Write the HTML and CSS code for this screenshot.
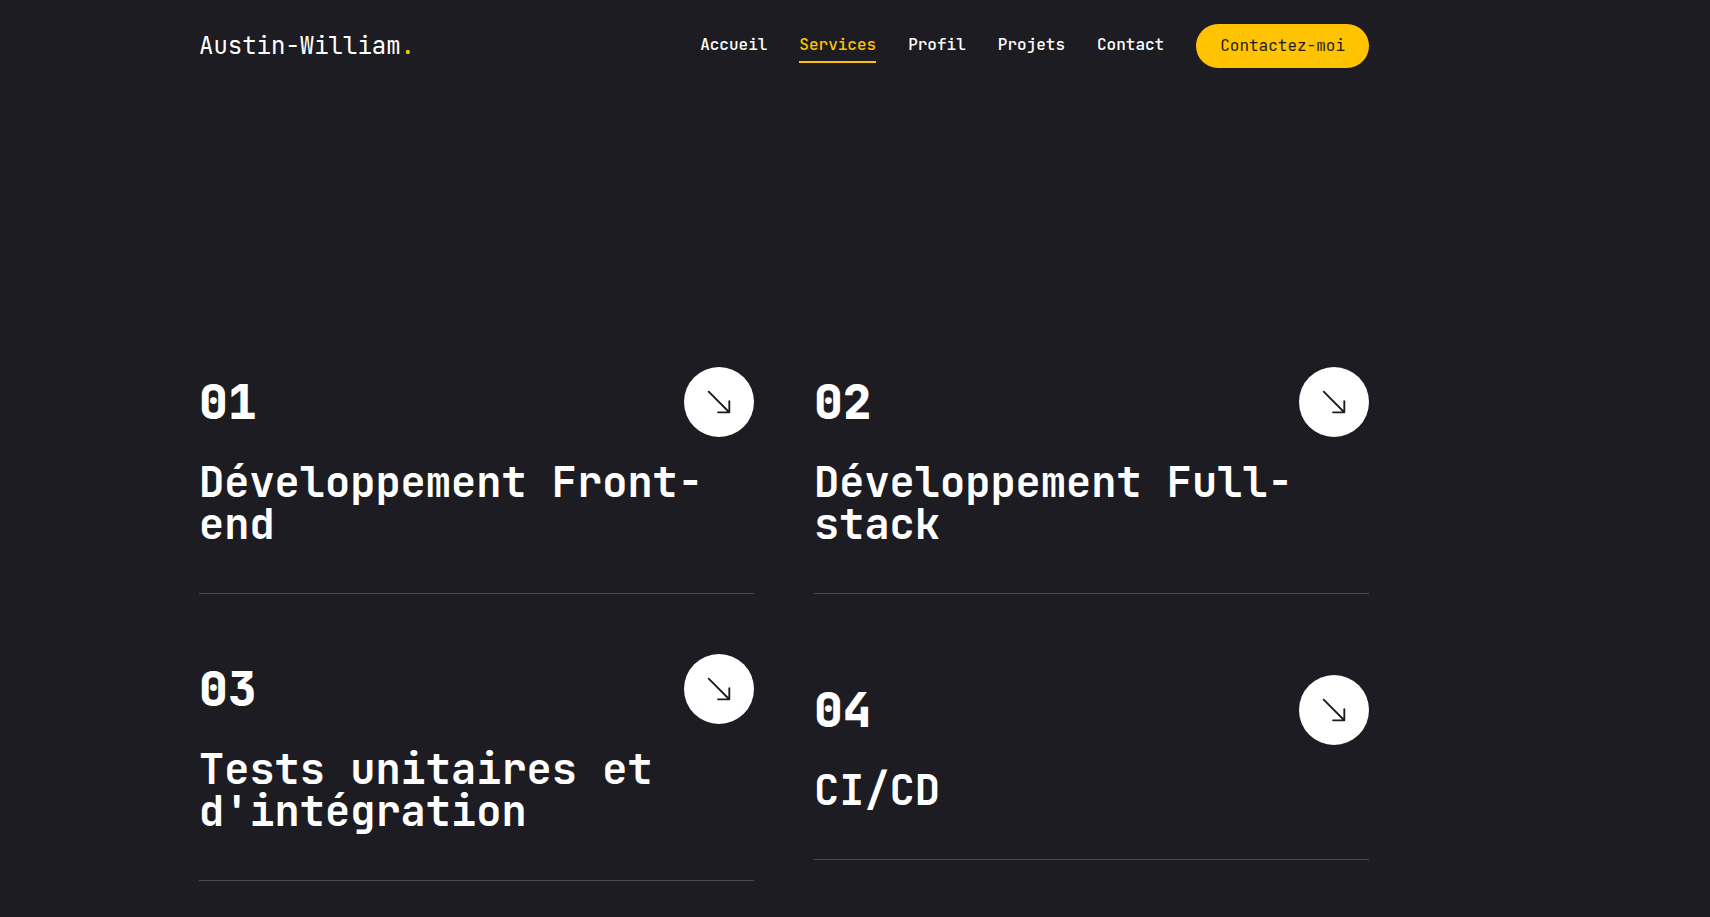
FILE: index.html
```html
<!DOCTYPE html>
<html lang="fr">
<head>
<meta charset="utf-8">
<meta name="viewport" content="width=device-width, initial-scale=1">
<title>Austin-William – Services</title>
<link rel="stylesheet" href="styles.css">
</head>
<body>
<svg class="sprite" aria-hidden="true">
  <symbol id="arrow" viewBox="0 0 16 16">
    <path fill-rule="evenodd" d="M14 13.5a.5.5 0 0 1-.5.5h-6a.5.5 0 0 1 0-1h4.793L2.146 2.854a.5.5 0 1 1 .708-.708L13 12.293V7.5a.5.5 0 0 1 1 0z"/>
  </symbol>
</svg>
<header class="header container">
  <a class="logo" href="#">Austin-William<span class="accent">.</span></a>
  <div class="menu">
    <nav class="nav">
      <a class="nav-link" href="#">Accueil</a>
      <a class="nav-link active" href="#" aria-current="page">Services</a>
      <a class="nav-link" href="#">Profil</a>
      <a class="nav-link" href="#">Projets</a>
      <a class="nav-link" href="#">Contact</a>
    </nav>
    <button class="cta" type="button">Contactez-moi</button>
  </div>
</header>
<main class="services container">
  <article class="card">
    <div class="card-top">
      <span class="number">01</span>
      <a class="arrow" href="#" aria-label="Développement Front-end"><svg class="icon"><use href="#arrow"/></svg></a>
    </div>
    <h2 class="title">Développement Front-end</h2>
  </article>
  <article class="card">
    <div class="card-top">
      <span class="number">02</span>
      <a class="arrow" href="#" aria-label="Développement Full-stack"><svg class="icon"><use href="#arrow"/></svg></a>
    </div>
    <h2 class="title">Développement Full-stack</h2>
  </article>
  <article class="card">
    <div class="card-top">
      <span class="number">03</span>
      <a class="arrow" href="#" aria-label="Tests unitaires et d'intégration"><svg class="icon"><use href="#arrow"/></svg></a>
    </div>
    <h2 class="title">Tests unitaires et d'intégration</h2>
  </article>
  <article class="card">
    <div class="card-top">
      <span class="number">04</span>
      <a class="arrow" href="#" aria-label="CI/CD"><svg class="icon"><use href="#arrow"/></svg></a>
    </div>
    <h2 class="title">CI/CD</h2>
  </article>
</main>
</body>
</html>
```
FILE: styles.css
```css
:root {
  --bg: #1c1c22;
  --accent: #ffc300;
}

* {
  box-sizing: border-box;
}

body {
  margin: 0;
  padding-right: 142px;
  background: var(--bg);
  color: #fff;
  font-family: "JetBrains Mono", "DejaVu Sans Mono", "Liberation Mono", monospace;
  font-size: 16px;
  line-height: 24px;
}

a {
  color: inherit;
  text-decoration: none;
}

.sprite {
  display: none;
}

.container {
  max-width: 1200px;
  margin: 0 auto;
  padding: 0 15px;
}

.header {
  display: flex;
  align-items: center;
  justify-content: space-between;
  padding-top: 24px;
  padding-bottom: 24px;
}

.logo {
  font-size: 24px;
  line-height: 32px;
}

.accent {
  color: var(--accent);
}

.menu,
.nav {
  display: flex;
  align-items: center;
  gap: 32px;
}

.nav-link {
  padding: 4px 0;
  border-bottom: 2px solid transparent;
  font-weight: 500;
}

.active {
  color: var(--accent);
  border-color: var(--accent);
}

.cta {
  height: 44px;
  padding: 0 24px;
  border: 0;
  border-radius: 22px;
  background: var(--accent);
  color: var(--bg);
  font: inherit;
}

.services {
  display: grid;
  grid-template-columns: 1fr 1fr;
  align-items: center;
  gap: 60px;
  padding-top: 275px;
  padding-bottom: 36px;
}

.card {
  display: flex;
  flex-direction: column;
  gap: 24px;
  padding-bottom: 48px;
  border-bottom: 1px solid rgba(255, 255, 255, 0.2);
}

.card-top {
  display: flex;
  align-items: center;
  justify-content: space-between;
}

.number {
  font-size: 48px;
  line-height: 48px;
  font-weight: 800;
}

.arrow {
  display: flex;
  align-items: center;
  justify-content: center;
  width: 70px;
  height: 70px;
  border-radius: 50%;
  background: #fff;
  color: var(--bg);
}

.icon {
  width: 30px;
  height: 30px;
  fill: currentColor;
}

.title {
  margin: 0;
  font-size: 42px;
  line-height: 42px;
  font-weight: 700;
}
```
